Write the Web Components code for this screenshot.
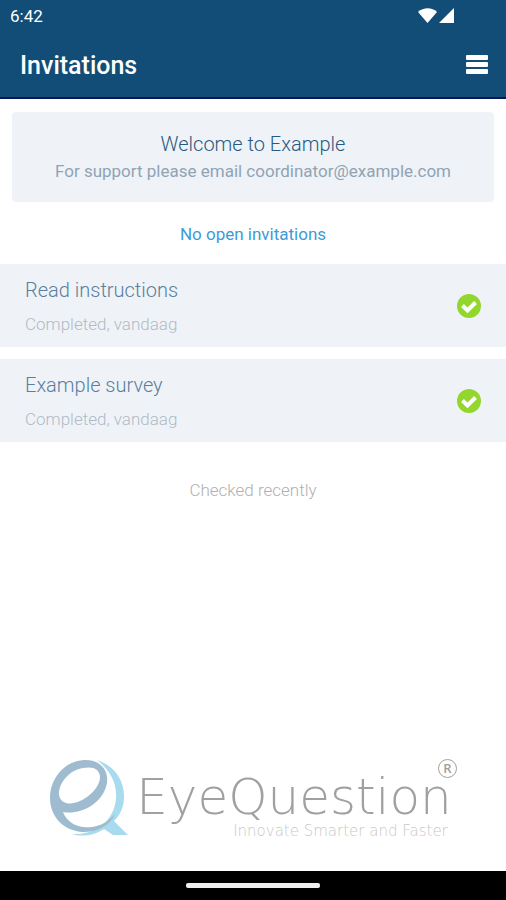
<!DOCTYPE html>
<html lang="en">
<head>
<meta charset="utf-8">
<meta name="viewport" content="width=device-width, initial-scale=1">
<title>Invitations</title>
<style>
  body { margin: 0; background: #fff; font-family: Roboto, "Liberation Sans", sans-serif; }
</style>
</head>
<body>
<invite-app></invite-app>
<script>
const define = (name, html) => {
  const template = document.createElement('template');
  template.innerHTML = html;
  customElements.define(name, class extends HTMLElement {
    constructor() {
      super();
      this.attachShadow({ mode: 'open' }).append(template.content.cloneNode(true));
    }
  });
};

define('status-bar', `
<style>
  :host { display: flex; align-items: center; justify-content: space-between; height: 32px; padding: 0 50px 0 10px; color: #fff; font-size: 17px; line-height: 32px; }
  svg { display: block; width: 38px; height: 18px; }
</style>
<span><slot></slot></span>
<svg viewBox="0 0 38 18" fill="#fff" aria-hidden="true"><path d="M0 5C5.500 0 14 0 19 5L9.500 16Z"/><path d="M36 1V16H21Z"/></svg>`);

define('title-bar', `
<style>
  :host { display: flex; align-items: center; justify-content: space-between; height: 65px; padding: 0 18px 0 20px; color: #fff; border-bottom: 2px solid #07145f; }
  h1 { margin: 0; font-size: 25px; line-height: 32px; padding-top: 2px; font-weight: 500; }
  button { padding: 0; border: 0; background: none; color: inherit; }
  svg { display: block; width: 23px; height: 20px; }
</style>
<h1><slot></slot></h1>
<button type="button" aria-label="Menu"><svg viewBox="0 0 23 20" fill="currentColor"><rect x="1" width="22" height="5" rx="1"/><rect x="1" y="7" width="22" height="5" rx="1"/><rect x="1" y="14" width="22" height="5" rx="1"/></svg></button>`);

define('welcome-card', `
<style>
  :host { display: block; margin: 13px 12px 0; padding: 19px 12px 17px; border-radius: 4px; background: #eff3f7; text-align: center; }
  h2 { margin: 0; font-size: 20px; line-height: 27px; font-weight: 300; color: #275a82; }
  p { margin: 0; font-size: 17px; line-height: 27px; font-weight: 400; color: #8fa3b5; }
</style>
<h2><slot name="heading"></slot></h2>
<p><slot></slot></p>`);

define('status-note', `
<style>
  :host { display: block; text-align: center; font-size: 17px; line-height: 24px; color: #3b9bd8; }
  :host([muted]) { font-weight: 300; color: #b0b0b0; }
</style>
<slot></slot>`);

define('survey-item', `
<style>
  :host { display: flex; align-items: center; justify-content: space-between; padding: 8px 25px; background: #eff3f7; font-weight: 300; }
  h3 { margin: 0; font-size: 20px; line-height: 37px; font-weight: 300; color: #5a7f9e; }
  p { margin: 0; font-size: 17px; line-height: 30px; font-weight: 300; color: #b0bbc6; }
  svg { display: block; width: 24px; height: 24px; }
</style>
<div><h3><slot name="name"></slot></h3><p><slot></slot></p></div>
<svg viewBox="0 0 24 24" role="img" aria-label="Completed"><circle cx="12" cy="12" r="12" fill="#93d72e"/><path d="M5.500 11.500L10.500 16.500L18.500 8.500" fill="none" stroke="#fff" stroke-width="4"/></svg>`);

define('brand-logo', `
<style>
  :host { display: flex; align-items: flex-start; justify-content: center; color: #a0a0a0; }
  .mark { flex: none; display: block; width: 80px; height: 78px; }
  .text { display: flex; flex-direction: column; align-items: flex-end; padding: 10px 0 0 7px; }
  .name { font: 200 50px/56px "DejaVu Sans", sans-serif; }
  .tag { font: 200 15px/12px "DejaVu Sans", sans-serif; color: #c8c8c8; padding-right: 4px; }
  .reg { flex: none; display: grid; place-items: center; box-sizing: border-box; width: 19px; height: 19px; margin-left: -14px; border: 1px solid; border-radius: 50%; font: 600 13px/17px "Open Sans", sans-serif; }
</style>
<svg class="mark" viewBox="0 0 80 78" aria-hidden="true">
  <path d="M48 1C66 7 76 22 75 40C74 51 70 57 65 62L79 76H64L55 70C45 77 32 78 23 75C41 76 57 68 64 52C72 32 64 13 48 1Z" fill="#a9dbef"/>
  <path fill-rule="evenodd" d="M35 1C51 0 62 12 57 28C51 46 31 56 14 53C19 66 34 72 51 66C57 64 62 59 66 55C61 67 48 73 34 73C15 72 1 58 1 39C1 19 16 2 35 1ZM34 9C20 11 9 25 10 36C12 47 26 47 38 38C49 30 55 18 48 11C45 8 39 8 34 9Z" fill="#9fbbd0"/>
</svg>
<div class="text"><span class="name">EyeQuestion</span><span class="tag">Innovate Smarter and Faster</span></div>
<span class="reg">R</span>`);

define('home-bar', `
<style>
  :host { display: grid; place-items: center; height: 29px; background: #000; }
  i { width: 134px; height: 5px; border-radius: 2px; background: #eee; }
</style>
<i></i>`);

define('invite-app', `
<style>
  :host { display: flex; flex-direction: column; min-height: 100vh; }
  header { background: #114d76; }
  main { flex: 1; display: flex; flex-direction: column; }
  .open { margin: 20px 0 18px; }
  .list { display: grid; gap: 12px; }
  .checked { margin-top: 36px; }
  brand-logo { margin-top: auto; margin-bottom: 34px; }
</style>
<header><status-bar>6:42</status-bar><title-bar>Invitations</title-bar></header>
<main>
  <welcome-card><span slot="heading">Welcome to Example</span>For support please email coordinator@example.com</welcome-card>
  <status-note class="open">No open invitations</status-note>
  <div class="list">
    <survey-item><span slot="name">Read instructions</span>Completed, vandaag</survey-item>
    <survey-item><span slot="name">Example survey</span>Completed, vandaag</survey-item>
  </div>
  <status-note class="checked" muted>Checked recently</status-note>
  <brand-logo></brand-logo>
</main>
<home-bar></home-bar>`);
</script>
</body>
</html>
